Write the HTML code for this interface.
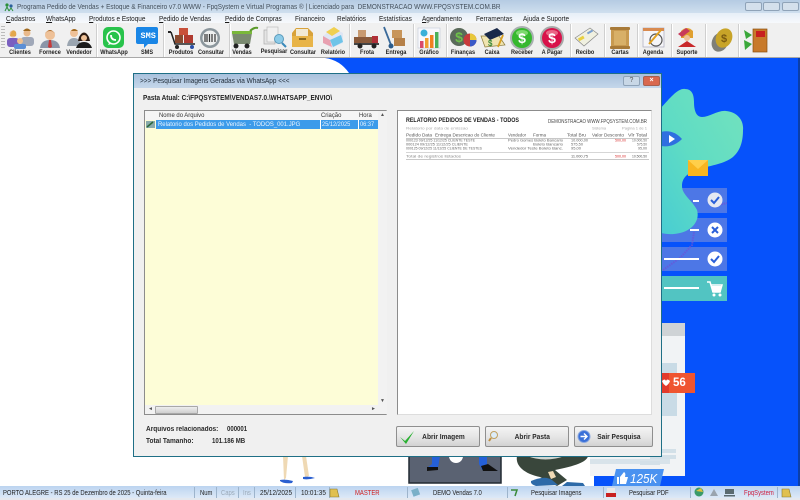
<!DOCTYPE html>
<html><head><meta charset="utf-8"><style>
html,body{margin:0;padding:0}
body{width:800px;height:500px;overflow:hidden;position:relative;background:#fff;font-family:"Liberation Sans",sans-serif;color:#222}
.a{position:absolute}
.t{position:absolute;white-space:nowrap;transform-origin:0 50%}
.m{position:absolute;top:13.500px;font-size:7.300px;line-height:10px;color:#1a1a1a;white-space:nowrap;transform:scaleX(.88);transform-origin:0 50%}
.m u{text-decoration:underline}
.l{position:absolute;top:48.500px;font-size:6.200px;font-weight:bold;line-height:8px;color:#222;transform:translateX(-50%) scaleX(.9);white-space:nowrap}
.s{position:absolute;top:24px;width:1px;height:33px;background:#cfcfcf;border-right:1px solid #fff}
.btn{position:absolute;top:426px;height:19px;border:1px solid #8f8f8f;background:linear-gradient(#f4f4f4,#e6e6e6 50%,#d2d2d2);border-radius:2px;font-size:7.600px;font-weight:bold;line-height:19px;text-align:center;color:#2a2a2a}
.btn span{display:inline-block;transform:scaleX(.87)}
.st{position:absolute;top:488px;font-size:7.200px;line-height:9px;color:#222;white-space:nowrap;transform:scaleX(.82);transform-origin:0 50%}
.sd{position:absolute;top:487px;width:1px;height:11px;background:#9db4cc}
.h{font-size:6.800px;line-height:8px;color:#333;transform:scaleX(.87)}
.r{font-size:6.800px;line-height:8px;color:#eaf4ff}
</style></head><body>

<!-- desktop wallpaper -->
<svg class="a" style="left:0;top:0" width="800" height="500" viewBox="0 0 800 500">
<defs><linearGradient id="g" x1="1" y1="0" x2="0" y2="1"><stop offset="0" stop-color="#74e2bd"/><stop offset=".55" stop-color="#5fdcc4"/><stop offset="1" stop-color="#48cdd2"/></linearGradient></defs>
<path d="M325 58 Q340 60 349 73 L661 73 L661 323 L685 323 L685 476 L594 476 L594 486 L798 486 L798 58 Z" fill="#0652fb"/>
<rect x="798" y="58" width="2" height="428" fill="#0b3fa8"/>
<rect x="590" y="456" width="95" height="20" fill="#f1f3f5"/>
<rect x="661" y="323" width="24" height="133" fill="#f1f3f5"/>
<rect x="661" y="323" width="24" height="13" fill="#cfd3d6"/>
<rect x="661" y="363" width="16" height="53" fill="#c9dbe6"/>
<rect x="650" y="449" width="26" height="4" fill="#d3e0e8"/>
<rect x="650" y="455" width="26" height="4" fill="#d3e0e8"/>
<rect x="590" y="459" width="80" height="5" fill="#d8e3ea"/>
<rect x="640" y="461" width="20" height="4" fill="#d3e0e8"/>
<!-- rows -->
<rect x="661" y="188" width="66" height="25" fill="#4d77e6"/>
<rect x="661" y="218" width="66" height="24" fill="#4d77e6"/>
<rect x="661" y="247" width="66" height="24" fill="#4d77e6"/>
<rect x="661" y="276" width="66" height="25" fill="#52c4c2"/>
<path d="M663 270 L680 258 L692 245 L694 232 M714 206 L727 203" fill="none" stroke="#6a55d8" stroke-width="2" stroke-dasharray="1.500 1" opacity=".8"/>
<!-- teal blob -->
<path d="M661 108 C670 98 678 88 685 89 C692 89 694 95 694 102 C694 110 696 117 702 117 C710 117 718 110 726 111 C737 112 744 120 743 130 C743 140 741 150 733 157 C724 164 712 165 700 169 C690 172 682 176 682 186 C682 195 692 200 697 210 C700 220 693 230 680 233 C672 235 665 234 661 233 Z" fill="url(#g)"/>
<!-- video bubble -->
<path d="M661 132 Q673 129 682 139 Q673 148 661 146 Z" fill="#2f6fe0"/>
<path d="M669 135 L675 139 L669 143 Z" fill="#fff"/>
<!-- envelope -->
<rect x="688" y="160" width="20" height="16" fill="#f8b520"/>
<path d="M688 160 L698 169 L708 160 Z" fill="#ffcf4a"/>
<rect x="693" y="200" width="6" height="2" fill="#fff"/>
<rect x="690" y="229" width="9" height="2" fill="#fff"/>
<rect x="664" y="258" width="35" height="2" fill="#fff"/>
<rect x="664" y="287" width="35" height="2" fill="#fff"/>
<circle cx="715" cy="200" r="7.500" fill="#e6e9f2"/><path d="M711 200 L714 203 L719 197" fill="none" stroke="#2a5fd8" stroke-width="2"/>
<circle cx="715" cy="230" r="7.500" fill="#fff"/><path d="M712 227 L718 233 M718 227 L712 233" stroke="#2a5fd8" stroke-width="2"/>
<circle cx="715" cy="259" r="7.500" fill="#fff"/><path d="M711 259 L714 262 L719 256" fill="none" stroke="#2a5fd8" stroke-width="2"/>
<path d="M707 282 L710 282 L713 292 L720 292 L722 285 L711 285" fill="none" stroke="#fff" stroke-width="1.500"/>
<rect x="712" y="286" width="9" height="6" fill="#fff"/>
<circle cx="714" cy="295" r="1.500" fill="#fff"/><circle cx="720" cy="295" r="1.500" fill="#fff"/>
<!-- 56 badge -->
<rect x="661" y="373" width="34" height="20" fill="#ef5530"/>
<rect x="661" y="373" width="8" height="20" fill="#e23a2c"/>
<path d="M662 381 Q665 378 666 381 Q667 378 670 381 Q669 384 666 386 Q663 384 662 381 Z" fill="#fff"/>
<!-- 125K badge -->
<path d="M616 469 L664 469 L660 486 L612 486 Z" fill="#4a92f0"/>
<path d="M617 477 H619 V484 H617 Z M620 484 V477 L624 472 Q626 473 625 477 H628 L626 484 Z" fill="#fff"/>
<!-- legs -->
<path d="M283 456 L288 456 L286 478 L284 480 Z" fill="#efd9b4"/>
<path d="M302 456 L306 456 L309 476 L305 477 Z" fill="#efd9b4"/>
<path d="M280 480 Q286 479 293 481 L292 483 Q284 484 280 481 Z" fill="#2a5fd0"/>
<path d="M303 477 Q310 476 315 478 Q308 480 303 479 Z" fill="#2a5fd0"/>
<!-- dark panel -->
<rect x="409" y="456" width="92" height="27" fill="#5a6272" stroke="#222a33" stroke-width="1.500"/>
<path d="M432 456 L440 456 L438 468 L427 470 L427 468 L432 464 Z" fill="#2560d8"/>
<path d="M479 456 L487 456 L487 464 L498 471 L482 470 L479 464 Z" fill="#2560d8"/>
<path d="M427 467 L438 467 L438 470 L427 471 Z" fill="#111"/>
<path d="M481 466 L488 464 L498 471 L483 471 Z" fill="#111"/>
<circle cx="456" cy="456" r="7" fill="#fff"/>
<!-- seated figure -->
<path d="M517 456 C515 466 525 474 540 477 L557 486 L567 480 L555 470 C575 466 587 462 588 456 Z" fill="#39463b"/>
<path d="M527 456 Q545 463 565 456 Z" fill="#d0d6d2"/>
<path d="M548 472 L553 471 L556 477 L551 479 Z" fill="#efd9b4"/>
<path d="M531 481 Q545 475 552 480 L558 485 L536 486 Q530 484 531 481 Z" fill="#2d6aa8"/>
<path d="M567 482 L583 483 L585 486 L562 486 Z" fill="#2d6aa8"/>
</svg>
<div class="t" style="left:630px;top:471px;font-size:13px;line-height:16px;font-style:italic;color:#fff;transform:scaleX(.9)">125K</div>
<div class="t" style="left:673px;top:376px;font-size:11.500px;line-height:14px;color:#fff;font-weight:bold">56</div>

<!-- title bar -->
<div class="a" style="left:0;top:0;width:800px;height:13px;background:linear-gradient(#b5cbe3,#cfdfee)"></div>
<svg class="a" style="left:4px;top:2px" width="10" height="10"><circle cx="3" cy="3" r="1.600" fill="#2a8f3a"/><circle cx="7" cy="4" r="1.600" fill="#2a5f9a"/><path d="M1 9 L3 5 L5 9 M5 9 L7 6 L9 9" stroke="#2a8f3a" fill="none"/></svg>
<div class="t" style="left:17px;top:2px;font-size:7.200px;line-height:10px;color:#44505c;transform:scaleX(.89)">Programa Pedido de Vendas + Estoque &amp; Financeiro v7.0 WWW - FpqSystem e Virtual Programas ® | Licenciado para &nbsp;DEMONSTRACAO WWW.FPQSYSTEM.COM.BR</div>
<div class="a" style="left:745px;top:2px;width:15px;height:7px;border:1px solid #8fa3b8;border-radius:2px;background:#d4e0ec"></div>
<div class="a" style="left:763px;top:2px;width:15px;height:7px;border:1px solid #8fa3b8;border-radius:2px;background:#d4e0ec"></div>
<div class="a" style="left:782px;top:2px;width:15px;height:7px;border:1px solid #8fa3b8;border-radius:2px;background:#d4e0ec"></div>

<!-- menu -->
<div class="a" style="left:0;top:13px;width:800px;height:10px;background:linear-gradient(#e6eef7,#f7f9fc)"></div>
<div class="m" style="left:6px"><u>C</u>adastros</div>
<div class="m" style="left:46px"><u>W</u>hatsApp</div>
<div class="m" style="left:88.500px"><u>P</u>rodutos e Estoque</div>
<div class="m" style="left:159px"><u>P</u>edido de Vendas</div>
<div class="m" style="left:225px"><u>P</u>edido de Compras</div>
<div class="m" style="left:295px">Financeiro</div>
<div class="m" style="left:337px">Relatórios</div>
<div class="m" style="left:379px">Estatísticas</div>
<div class="m" style="left:422px"><u>A</u>gendamento</div>
<div class="m" style="left:476px">Ferramentas</div>
<div class="m" style="left:523px">Ajuda e Suporte</div>

<!-- toolbar -->
<div class="a" style="left:0;top:23px;width:800px;height:34px;background:#f0f0f0;border-bottom:1px solid #a8a8a8"></div>
<div class="a" style="left:1px;top:26px;width:4px;height:24px;background:repeating-linear-gradient(#bbb 0 1px,transparent 1px 3px)"></div>
<div class="s" style="left:96px"></div><div class="s" style="left:163px"></div><div class="s" style="left:229px"></div><div class="s" style="left:349px"></div><div class="s" style="left:413px"></div><div class="s" style="left:446px"></div><div class="s" style="left:570px"></div><div class="s" style="left:604px"></div><div class="s" style="left:637px"></div><div class="s" style="left:671px"></div><div class="s" style="left:705px"></div><div class="s" style="left:738px"></div>

<svg class="a" style="left:0;top:24px" width="800" height="30" viewBox="0 24 800 30">
<!-- clientes -->
<circle cx="27" cy="33" r="3.500" fill="#e9b98a"/><rect x="21" y="37" width="13" height="9" rx="3" fill="#a0a8b8"/><path d="M23 31 Q27 26 31 31 Z" fill="#a06a20"/>
<circle cx="13" cy="34" r="3.500" fill="#e9b98a"/><rect x="7" y="38" width="12" height="9" rx="3" fill="#7a5fc0"/>
<circle cx="20" cy="41" r="3" fill="#f0c090"/><rect x="14" y="44" width="12" height="5" rx="2" fill="#5c8fd6"/>
<path d="M11 33 Q13 28 16 32 L16 36 L10 36 Z" fill="#e0a030" opacity=".7"/>
<!-- fornece -->
<circle cx="50" cy="35" r="5" fill="#eec198"/><path d="M45 34 Q50 26 55 34 L54 32 Q50 30 46 32 Z" fill="#a86a2a"/><path d="M40 48 Q41 40 50 40 Q59 40 60 48 Z" fill="#8b95a8"/><path d="M49 40 L51 40 L52 47 L50 48 L48 47 Z" fill="#c63a3a"/>
<!-- vendedor -->
<circle cx="74" cy="33" r="4" fill="#eec198"/><path d="M67 46 Q68 38 74 38 Q80 38 81 46 Z" fill="#9aa5b0"/><path d="M71 31 Q74 27 78 31 Z" fill="#a06a20"/>
<circle cx="84" cy="37" r="4" fill="#eec198"/><path d="M79 37 Q84 28 89 37 L90 41 L78 41 Z" fill="#2a1a12"/><circle cx="84" cy="38" r="3" fill="#eec198"/><path d="M76 48 Q78 42 84 42 Q90 42 92 48 Z" fill="#1c1c1c"/>
<!-- whatsapp -->
<rect x="103" y="27" width="21" height="21" rx="5" fill="#28c34b"/><circle cx="113.500" cy="37.500" r="6.500" fill="none" stroke="#fff" stroke-width="1.600"/><path d="M109 43 L108 45 L111 44" fill="#fff"/><path d="M111 35 Q111 40 116 40" fill="none" stroke="#fff" stroke-width="1.800"/>
<!-- sms -->
<path d="M138 27 H156 Q158 27 158 29 V42 Q158 44 156 44 H148 L144 48 V44 H138 Q136 44 136 42 V29 Q136 27 138 27 Z" fill="#1a86e6"/>
<!-- produtos -->
<rect x="168" y="31" width="3" height="2" fill="#222"/><path d="M171 32 L175 44 H195" fill="none" stroke="#222" stroke-width="1.500"/><rect x="179" y="28" width="9" height="7" fill="#c8503a"/><rect x="175" y="35" width="8" height="8" fill="#8a4a30"/><rect x="184" y="35" width="9" height="8" fill="#b03a30"/><circle cx="177" cy="47" r="2" fill="#222"/><circle cx="192" cy="47" r="2" fill="#2a4fa8"/>
<!-- consultar -->
<circle cx="210" cy="38" r="10" fill="#8b969c"/><circle cx="210" cy="38" r="7.500" fill="#eef0f0"/><path d="M205 34 V42 M207 34 V42 M209.500 34 V42 M212 34 V42 M215 34 V42" stroke="#333" stroke-width="1.200"/>
<!-- vendas -->
<path d="M232 33 H252 L250 44 H234 Z" fill="#7a8a70"/><rect x="232" y="31" width="20" height="3" fill="#7ab83a"/><path d="M250 31 Q254 27 258 28" stroke="#5a9a2a" stroke-width="2" fill="none"/><circle cx="236" cy="46" r="2.500" fill="#222"/><circle cx="247" cy="46" r="2.500" fill="#222"/>
<!-- pesquisar -->
<rect x="264" y="30" width="11" height="14" fill="#e4e4e4" stroke="#aaa" stroke-width=".7"/><rect x="267" y="27" width="11" height="15" fill="#f0f0f0" stroke="#bbb" stroke-width=".7"/><circle cx="279" cy="39" r="4.500" fill="#8ccbe8" stroke="#5a9abb"/><path d="M282 43 L286 47" stroke="#3a8abb" stroke-width="2"/>
<!-- consultar folder -->
<path d="M292 33 L296 28 H308 L313 33 V47 H292 Z" fill="#d8a23a"/><rect x="296" y="29" width="12" height="7" fill="#f2ead4"/><rect x="292" y="36" width="21" height="11" fill="#e8b448"/><rect x="299" y="38" width="7" height="2" fill="#8a6a20"/>
<!-- relatorio -->
<path d="M323 36 L333 28 L343 33 L343 43 L332 48 L323 43 Z" fill="#dfe6f4"/><path d="M326 32 L334 27 L340 31 L332 36 Z" fill="#f0d050"/><path d="M330 40 L341 35 L343 42 L333 47 Z" fill="#6fc4e8"/><path d="M323 36 L330 40 L332 47 L323 43 Z" fill="#e8a0b0"/>
<!-- frota -->
<rect x="354" y="37" width="18" height="7" fill="#8a5a3a"/><rect x="358" y="30" width="8" height="7" fill="#c89a70"/><path d="M372 36 H378 V44 H372 Z" fill="#b03038"/><rect x="354" y="43" width="25" height="2" fill="#444"/><circle cx="360" cy="46" r="2.500" fill="#222"/><circle cx="374" cy="46" r="2.500" fill="#222"/>
<!-- entrega -->
<path d="M384 27 L391 45" stroke="#3a6a9a" stroke-width="1.800"/><rect x="392" y="30" width="10" height="8" fill="#c8955a"/><rect x="394" y="38" width="11" height="8" fill="#b58048"/><circle cx="391" cy="46" r="2.500" fill="#2a5a8a"/>
<!-- grafico -->
<rect x="418" y="28" width="22" height="20" fill="#f8f8fc" stroke="#c0c8d8" stroke-width=".6"/><circle cx="424" cy="33" r="3.500" fill="#3ab0d8"/><rect x="420" y="41" width="3.500" height="7" fill="#d94a6a"/><rect x="425" y="38" width="3.500" height="10" fill="#f0a030"/><rect x="430" y="35" width="3.500" height="13" fill="#f08020"/><rect x="435" y="32" width="3.500" height="16" fill="#4ab05a"/>
<!-- financas -->
<circle cx="459" cy="37" r="9" fill="#5a6a5a"/><text x="459" y="42" font-size="14" font-weight="bold" fill="#6ec04a" text-anchor="middle" font-family="Liberation Sans">$</text><circle cx="470" cy="40" r="6.500" fill="#c83a3a"/><path d="M470 40 V33.500 A6.500 6.500 0 0 1 476.500 40 Z" fill="#e8c83a"/><path d="M470 40 H476.500 A6.500 6.500 0 0 1 470 46.500 Z" fill="#3a5ac8"/>
<!-- caixa -->
<path d="M481 36 L499 36 L505 45 L485 47 Z" fill="#f0e4b0" stroke="#8a7a3a" stroke-width=".7"/><path d="M484 34 L497 28 L504 34 L490 40 Z" fill="#1a2a4a"/><text x="488" y="46" font-size="8" font-weight="bold" fill="#3a8a3a" font-family="Liberation Sans">$</text><path d="M498 47 L503 35" stroke="#d8a020" stroke-width="1.800"/>
<!-- receber -->
<circle cx="522" cy="38" r="12" fill="#a8b0b0"/><circle cx="522" cy="38" r="10" fill="#36b82e"/><ellipse cx="522" cy="33" rx="6" ry="3" fill="#9be88a" opacity=".7"/><text x="522" y="43" font-size="14" font-weight="bold" fill="#fff" text-anchor="middle" font-family="Liberation Sans">$</text>
<!-- a pagar -->
<circle cx="552" cy="38" r="12" fill="#a8a8a8"/><circle cx="552" cy="38" r="10" fill="#d8124a"/><ellipse cx="552" cy="33" rx="6" ry="3" fill="#f28aa0" opacity=".7"/><text x="552" y="43" font-size="14" font-weight="bold" fill="#fff" text-anchor="middle" font-family="Liberation Sans">$</text>
<!-- recibo -->
<path d="M575 38 L590 28 L598 34 L584 46 Z" fill="#f0f0e0" stroke="#888" stroke-width=".7"/><rect x="578" y="37" width="6" height="3" fill="#e8d040" transform="rotate(-30 581 38)"/><rect x="587" y="31" width="6" height="2" fill="#7aa0d0" transform="rotate(-30 590 32)"/>
<!-- cartas -->
<rect x="611" y="28" width="18" height="20" fill="#c89a50"/><rect x="610" y="27" width="20" height="3" rx="1" fill="#a87a38"/><rect x="610" y="46" width="20" height="3" rx="1" fill="#a87a38"/><rect x="614" y="31" width="12" height="14" fill="#d8b068"/>
<!-- agenda -->
<rect x="643" y="28" width="21" height="19" fill="#f5f5f8" stroke="#aab" stroke-width=".7"/><rect x="643" y="28" width="21" height="3" fill="#d88a50"/><circle cx="656" cy="40" r="6" fill="none" stroke="#555" stroke-width="1.200"/><path d="M649 44 L661 30" stroke="#e0a020" stroke-width="2"/>
<!-- suporte -->
<path d="M681 31 Q687 25 693 31 L693 38 L681 38 Z" fill="#e0a030"/><path d="M678 34 L686 28 L690 31 L682 37 Z" fill="#c83a5a"/><circle cx="687" cy="38" r="3" fill="#eec198"/><path d="M678 47 L687 41 L696 47 Z" fill="#c8282a"/>
<!-- coin -->
<ellipse cx="720" cy="42" rx="8" ry="10" fill="#7f7f78" transform="rotate(25 720 42)"/><ellipse cx="724" cy="38" rx="8" ry="10" fill="#c8a428" transform="rotate(25 724 38)"/><text x="724" y="42" font-size="11" font-weight="bold" fill="#7a5a10" text-anchor="middle" font-family="Liberation Sans">$</text>
<!-- exit -->
<rect x="753" y="29" width="14" height="23" fill="#c87a2a" stroke="#8a5010" stroke-width=".7"/><rect x="756" y="31" width="9" height="6" fill="#c82020"/><path d="M744 30 L752 35 L746 39 Z M744 40 L752 44 L745 50 Z" fill="#3aa83a"/>
</svg>
<div class="t" style="left:140.500px;top:31px;font-size:8.500px;font-weight:bold;line-height:10px;color:#fff;font-family:'Liberation Mono',monospace">SMS</div>

<div class="l" style="left:20px">Clientes</div><div class="l" style="left:50px">Fornece</div><div class="l" style="left:79px">Vendedor</div><div class="l" style="left:113.500px">WhatsApp</div><div class="l" style="left:147px">SMS</div><div class="l" style="left:181px">Produtos</div><div class="l" style="left:211px">Consultar</div><div class="l" style="left:242px">Vendas</div><div class="l" style="left:273.500px;top:48px">Pesquisar</div><div class="l" style="left:303px">Consultar</div><div class="l" style="left:333px">Relatório</div><div class="l" style="left:367px">Frota</div><div class="l" style="left:396px">Entrega</div><div class="l" style="left:429px">Gráfico</div><div class="l" style="left:463px">Finanças</div><div class="l" style="left:492px">Caixa</div><div class="l" style="left:522px">Receber</div><div class="l" style="left:552px">A Pagar</div><div class="l" style="left:585px">Recibo</div><div class="l" style="left:620px">Cartas</div><div class="l" style="left:653px">Agenda</div><div class="l" style="left:687px">Suporte</div>

<!-- dialog -->
<div class="a" style="left:133px;top:73px;width:527px;height:382px;background:#f0f0f0;border:1px solid #1f6f86"></div>
<div class="a" style="left:134px;top:74px;width:527px;height:14px;background:linear-gradient(#a9c1dc,#c5d7ea)"></div>
<div class="t" style="left:140px;top:76px;font-size:7.500px;line-height:10px;color:#1e2a36;transform:scaleX(.86)">&gt;&gt;&gt; Pesquisar Imagens Geradas via WhatsApp &lt;&lt;&lt;</div>
<div class="a" style="left:623px;top:76px;width:15px;height:8px;border:1px solid #8fa3b8;border-radius:2px;background:#c8d7e6;font-size:7px;line-height:8px;text-align:center;color:#555">?</div>
<div class="a" style="left:643px;top:76px;width:15px;height:8px;border:1px solid #a86050;border-radius:2px;background:#d9684f;font-size:7px;line-height:8px;text-align:center;color:#fff;font-weight:bold">×</div>
<div class="t" style="left:143px;top:93px;font-size:7.500px;font-weight:bold;line-height:10px;color:#222;transform:scaleX(.855)">Pasta Atual: C:\FPQSYSTEM\VENDAS7.0.\WHATSAPP_ENVIO\</div>

<!-- list -->
<div class="a" style="left:144px;top:110px;width:243px;height:305px;background:#fdfdd7;border:1px solid #8c8c8c;border-right:1px solid #d0d0d0;box-sizing:border-box"></div>
<div class="a" style="left:145px;top:111px;width:233px;height:9px;background:#f5f5f5"></div>
<div class="t h" style="left:159px;top:112px">Nome do Arquivo</div>
<div class="t h" style="left:321px;top:112px">Criação</div>
<div class="t h" style="left:359px;top:112px">Hora</div>
<div class="a" style="left:156px;top:120px;width:222px;height:9px;background:#3c9bea"></div>
<div class="a" style="left:320px;top:120px;width:1px;height:9px;background:#fff"></div>
<div class="a" style="left:358px;top:120px;width:1px;height:9px;background:#fff"></div>
<svg class="a" style="left:146px;top:120px" width="9" height="9"><rect x="0" y="1" width="9" height="7" fill="#8aa"/><path d="M1 7 L7 2" stroke="#2a6a3a" stroke-width="1.500"/></svg>
<div class="t r" style="left:158px;top:120.500px;transform:scaleX(.875)">Relatorio dos Pedidos de Vendas &nbsp;- TODOS_001.JPG</div>
<div class="t r" style="left:322px;top:120.500px;transform:scaleX(.83)">25/12/2025</div>
<div class="t r" style="left:359.500px;top:120.500px;transform:scaleX(.83)">06:37</div>
<!-- scrollbars -->
<div class="a" style="left:378px;top:111px;width:9px;height:303px;background:#f2f2f2"></div>
<div class="t" style="left:380px;top:112px;font-size:5px;line-height:6px;color:#555">▲</div>
<div class="t" style="left:380px;top:398px;font-size:5px;line-height:6px;color:#555">▼</div>
<div class="a" style="left:145px;top:405px;width:233px;height:9px;background:#f2f2f2"></div>
<div class="t" style="left:148px;top:406px;font-size:5px;line-height:6px;color:#555">◄</div>
<div class="t" style="left:371px;top:406px;font-size:5px;line-height:6px;color:#555">►</div>
<div class="a" style="left:155px;top:406px;width:41px;height:6px;background:linear-gradient(#eee,#cfcfcf);border:1px solid #a8a8a8;border-radius:1px"></div>

<!-- preview -->
<div class="a" style="left:397px;top:110px;width:255px;height:305px;background:#fff;border:1px solid #8c8c8c;border-right-color:#ddd;border-bottom-color:#ddd;box-sizing:border-box"></div>
<svg class="a" style="left:0;top:0" width="800" height="200" font-family="Liberation Sans" lengthAdjust="spacingAndGlyphs">
<text x="406" y="122" font-size="6" font-weight="bold" fill="#222" textLength="113" lengthAdjust="spacingAndGlyphs">RELATORIO PEDIDOS DE VENDAS - TODOS</text>
<text x="548" y="123" font-size="5" fill="#444" textLength="99" lengthAdjust="spacingAndGlyphs">DEMONSTRACAO WWW.FPQSYSTEM.COM.BR</text>
<g font-size="4" fill="#aaa">
<text x="406" y="129.500" textLength="62" lengthAdjust="spacingAndGlyphs">Relatorio por data de emissao</text>
<text x="592" y="129.500" textLength="14" lengthAdjust="spacingAndGlyphs">Sistema</text>
<text x="622" y="129.500" textLength="25" lengthAdjust="spacingAndGlyphs">Pagina 1 de 1</text>
</g>
<g font-size="4.300" fill="#555">
<text x="406" y="136.500" textLength="26" lengthAdjust="spacingAndGlyphs">Pedido Data</text>
<text x="435" y="136.500" textLength="60" lengthAdjust="spacingAndGlyphs">Entrega Descricao do Cliente</text>
<text x="508" y="136.500" textLength="18" lengthAdjust="spacingAndGlyphs">Vendedor</text>
<text x="533" y="136.500" textLength="13" lengthAdjust="spacingAndGlyphs">Forma</text>
<text x="567" y="136.500" textLength="19" lengthAdjust="spacingAndGlyphs">Total Bru</text>
<text x="592" y="136.500" textLength="32" lengthAdjust="spacingAndGlyphs">Valor Desconto</text>
<text x="628" y="136.500" textLength="19" lengthAdjust="spacingAndGlyphs">Vlr Total</text>
</g>
<rect x="406" y="138" width="243" height=".8" fill="#bbb"/>
<g font-size="4" fill="#666">
<text x="406" y="141.500" textLength="69" lengthAdjust="spacingAndGlyphs">000123 09/12/25 11/12/25 CLIENTE TESTE</text>
<text x="508" y="141.500" textLength="55" lengthAdjust="spacingAndGlyphs">Pedro Gomes Boleto Bancario</text>
<text x="571" y="141.500" textLength="17" lengthAdjust="spacingAndGlyphs">10.000,00</text>
<text x="615" y="141.500" textLength="11" fill="#d83030" lengthAdjust="spacingAndGlyphs">500,00</text>
<text x="632" y="141.500" textLength="15" lengthAdjust="spacingAndGlyphs">10.000,50</text>
<text x="406" y="145.500" textLength="62" lengthAdjust="spacingAndGlyphs">000124 09/12/25 11/12/25 CLIENTE</text>
<text x="533" y="145.500" textLength="30" lengthAdjust="spacingAndGlyphs">Boleto Bancario</text>
<text x="571" y="145.500" textLength="12" lengthAdjust="spacingAndGlyphs">575,50</text>
<text x="637" y="145.500" textLength="10" lengthAdjust="spacingAndGlyphs">575,50</text>
<text x="406" y="149.500" textLength="76" lengthAdjust="spacingAndGlyphs">000125 09/12/25 11/12/25 CLIENTE DE TESTES</text>
<text x="508" y="149.500" textLength="55" lengthAdjust="spacingAndGlyphs">Vendedor Teste Boleto Banc.</text>
<text x="571" y="149.500" textLength="10" lengthAdjust="spacingAndGlyphs">95,00</text>
<text x="638" y="149.500" textLength="9" lengthAdjust="spacingAndGlyphs">95,00</text>
</g>
<rect x="406" y="152" width="243" height=".8" fill="#ccc"/>
<g font-size="4" fill="#888">
<text x="406" y="157.500" textLength="55" lengthAdjust="spacingAndGlyphs">Total de registros listados</text>
<text x="571" y="157.500" textLength="17" fill="#555" lengthAdjust="spacingAndGlyphs">11.000,75</text>
<text x="615" y="157.500" textLength="11" fill="#d83030" lengthAdjust="spacingAndGlyphs">500,00</text>
<text x="632" y="157.500" textLength="15" fill="#555" lengthAdjust="spacingAndGlyphs">10.500,50</text>
</g>
<rect x="406" y="159" width="243" height=".8" fill="#bbb"/>
</svg>

<!-- bottom info -->
<div class="t" style="left:146px;top:425px;font-size:7px;font-weight:bold;line-height:9px;color:#2a2a2a;transform:scaleX(.93)">Arquivos relacionados:</div>
<div class="t" style="left:227px;top:425px;font-size:7px;font-weight:bold;line-height:9px;color:#2a2a2a;transform:scaleX(.86)">000001</div>
<div class="t" style="left:146px;top:436.500px;font-size:7px;font-weight:bold;line-height:9px;color:#2a2a2a;transform:scaleX(.93)">Total Tamanho:</div>
<div class="t" style="left:212px;top:436.500px;font-size:7px;font-weight:bold;line-height:9px;color:#2a2a2a;transform:scaleX(.87)">101.186 MB</div>

<div class="btn" style="left:396px;width:82px"><span style="margin-left:10px">Abrir Imagem</span></div>
<div class="btn" style="left:485px;width:82px"><span style="margin-left:10px">Abrir Pasta</span></div>
<div class="btn" style="left:574px;width:77px"><span style="margin-left:11px">Sair Pesquisa</span></div>
<svg class="a" style="left:396px;top:426px" width="260" height="22">
<path d="M4 11 L9 15 L18 5 L10 18 Z" fill="#28b030"/>
<circle cx="98" cy="9" r="3.500" fill="#dcecf8" stroke="#c0a060"/><path d="M95 12 L93 15" stroke="#c09040" stroke-width="2"/>
<circle cx="188" cy="10.500" r="6" fill="#3a70d8" stroke="#8aa8e0"/><path d="M184.500 10.500 H191 M188 7.500 L191 10.500 L188 13.500" stroke="#fff" stroke-width="1.400" fill="none"/>
</svg>

<!-- status bar -->
<div class="a" style="left:0;top:486px;width:800px;height:12px;background:linear-gradient(#bcd4f0,#dde9f7)"></div>
<div class="a" style="left:0;top:498px;width:800px;height:2px;background:#e4e8ee"></div>
<div class="st" style="left:3px;transform:scaleX(.82)">PORTO ALEGRE - RS 25 de Dezembro de 2025 - Quinta-feira</div>
<div class="st" style="left:200px">Num</div>
<div class="st" style="left:221px;color:#9aa9b8">Caps</div>
<div class="st" style="left:243px;color:#9aa9b8">Ins</div>
<div class="st" style="left:260px;transform:scaleX(.89)">25/12/2025</div>
<div class="st" style="left:301px;transform:scaleX(.89)">10:01:35</div>
<div class="st" style="left:355px;color:#d02020">MASTER</div>
<div class="st" style="left:433px">DEMO Vendas 7.0</div>
<div class="st" style="left:531px">Pesquisar Imagens</div>
<div class="st" style="left:629px">Pesquisar PDF</div>
<div class="st" style="left:744px;color:#d02040">FpqSystem</div>
<div class="sd" style="left:194px"></div><div class="sd" style="left:216px"></div><div class="sd" style="left:238px"></div><div class="sd" style="left:254px"></div><div class="sd" style="left:295px"></div><div class="sd" style="left:329px"></div><div class="sd" style="left:407px"></div><div class="sd" style="left:507px"></div><div class="sd" style="left:603px"></div><div class="sd" style="left:690px"></div><div class="sd" style="left:777px"></div>
<svg class="a" style="left:0;top:486px" width="800" height="14">
<path d="M330 3 L337 3 L339 11 L330 11 Z" fill="#e0c050" stroke="#8a7a30" stroke-width=".6"/>
<rect x="412" y="3" width="7" height="7" fill="#7ab0c8" transform="rotate(-20 415 6)"/>
<path d="M511 4 L517 4 L515 10" stroke="#3a8a3a" fill="none" stroke-width="1.500"/>
<rect x="607" y="2" width="8" height="9" fill="#e8e8e8"/><rect x="606" y="7" width="10" height="4" fill="#c82020"/>
<circle cx="699" cy="6" r="4.500" fill="#3a9a6a"/><path d="M696 5 L701 2 L703 6 Z" fill="#e0c040"/>
<path d="M710 10 L714 3 L718 10 Z" fill="#9aa4ae"/>
<rect x="725" y="3" width="9" height="5" fill="#5a6a70"/><rect x="724" y="9" width="11" height="1.500" fill="#5a6a70"/>
<path d="M782 3 L789 3 L791 11 L782 11 Z" fill="#e0c050" stroke="#8a7a30" stroke-width=".6"/>
</svg>
</body></html>
